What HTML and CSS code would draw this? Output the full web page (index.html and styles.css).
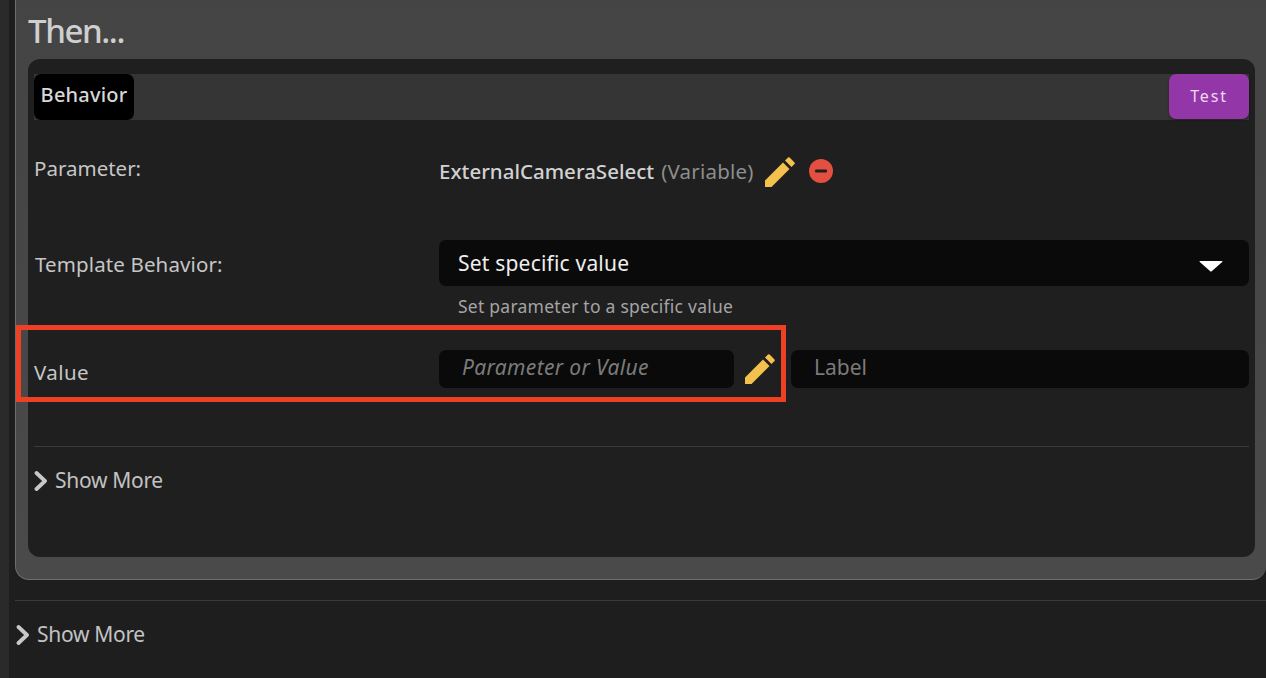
FILE: index.html
```html
<!DOCTYPE html>
<html lang="en">
<head>
<meta charset="utf-8">
<title>Then</title>
<link rel="stylesheet" href="styles.css">
</head>
<body>
<div class="page">
  <aside class="rail"></aside>
  <main class="main">
    <section class="panel">
      <h1 class="title">Then...</h1>
      <div class="card">
        <div class="tabbar">
          <div class="tab">Behavior</div>
          <button class="test">Test</button>
        </div>
        <div class="row row-param">
          <div class="label">Parameter:</div>
          <div class="param">
            <span class="pname">ExternalCameraSelect</span>
            <span class="ptype">(Variable)</span>
            <svg class="pencil pencil-a" viewBox="0 0 30 30"><path d="M0 30V23.5L18 5.5L24.5 12L6.500 30Z M20 3.500L23 .5Q23.800 -.2 24.600 .5L29.500 5.400Q30.200 6.200 29.500 7L26.500 10Z"/></svg>
            <svg class="minus" viewBox="0 0 24 24"><circle cx="12" cy="12" r="12"/><rect x="6" y="10.500" width="12" height="3" rx="1"/></svg>
          </div>
        </div>
        <div class="row row-template">
          <div class="label">Template Behavior:</div>
          <div class="field">
            <div class="select">Set specific value
              <svg class="caret" viewBox="0 0 24 12"><path d="M1 1H23Q24 1 23.200 2L13 11Q12 12 11 11L.8 2Q0 1 1 1Z"/></svg>
            </div>
            <div class="hint">Set parameter to a specific value</div>
          </div>
        </div>
        <div class="row row-value">
          <div class="label">Value</div>
          <div class="inputs">
            <div class="input italic">Parameter or Value</div>
            <svg class="pencil pencil-b" viewBox="0 0 30 30"><path d="M0 30V23.5L18 5.5L24.5 12L6.500 30Z M20 3.500L23 .5Q23.800 -.2 24.600 .5L29.500 5.400Q30.200 6.200 29.500 7L26.500 10Z"/></svg>
            <div class="input wide">Label</div>
          </div>
        </div>
        <div class="more inner">
          <svg class="chev" viewBox="0 0 14 20"><path d="M2.500 2L11 10L2.500 18"/></svg>
          <span>Show More</span>
        </div>
      </div>
    </section>
    <div class="more outer">
      <svg class="chev" viewBox="0 0 14 20"><path d="M2.500 2L11 10L2.500 18"/></svg>
      <span>Show More</span>
    </div>
  </main>
</div>
<div class="highlight"></div>
</body>
</html>
```
FILE: styles.css
```css
* { box-sizing: border-box; }
html, body { margin: 0; height: 100%; overflow: hidden; background: #1e1e1e; }
body { font-family: "Noto Sans", sans-serif; color: #c8c8c8; position: relative; }
.page { display: flex; height: 678px; }
.rail { width: 9px; background: #2a2a2a; flex: none; }
.main { flex: 1; padding-left: 6px; min-width: 0; }
.panel {
  height: 580px;
  background: linear-gradient(#444, #4a4a4a);
  border: 1px solid #6e6e6e;
  border-top: 0;
  border-right: 0;
  border-radius: 0 0 14px 14px;
  padding: 0 11px 0 12px;
}
.title { margin: 0; height: 59px; padding-top: 8px; font-size: 33px; line-height: 45px; font-weight: 500; color: #cfcfcf; letter-spacing: -1.400px; }
.card { height: 498px; background: #1f1f1f; border-radius: 12px; padding: 15px 6px 0; }
.tabbar { height: 46px; background: #353535; display: flex; justify-content: space-between; align-items: flex-start; }
.tab { width: 100px; height: 46px; background: #000; border-radius: 7px; color: #d8d8d8; font-size: 20px; line-height: 41px; text-align: center; font-weight: 500; letter-spacing: .2px; }
.test { width: 80px; height: 45px; background: #9337a8; border: 0; border-radius: 7px; color: #f0d8f5; font: 16px/1 "Noto Sans", sans-serif; letter-spacing: 1.800px; padding: 0 0 2px; box-shadow: 0 1px 2px rgba(0,0,0,.4); }
.row { display: grid; grid-template-columns: 405px 1fr; }
.label { font-size: 20.500px; color: #c6c6c6; line-height: 28px; letter-spacing: 0; }
.row-param { height: 120px; padding-top: 34px; }
.param { display: flex; align-items: center; height: 33px; font-size: 20.500px; }
.pname { color: #d2d2d2; font-weight: 500; margin-right: 7px; }
.ptype { color: #8e8e8e; letter-spacing: .2px; }
.pencil { fill: #f4c14e; flex: none; width: 30px; height: 30px; }
.pencil-a { margin: 2px 0 0 11px; }
.minus { width: 24px; height: 24px; margin-left: 14px; flex: none; }
.minus circle { fill: #e34f40; }
.minus rect { fill: #1f1f1f; }
.row-template { height: 110px; margin-top: -1px; }
.row-template .label { padding-top: 11px; padding-left: 1px; letter-spacing: .12px; }
.select { height: 46px; background: #0a0a0a; border-radius: 7px; color: #efefef; font-size: 21px; line-height: 46px; padding: 0 19px; display: flex; justify-content: space-between; align-items: center; letter-spacing: .2px; margin-top: 1px; }
.caret { width: 24px; height: 12px; fill: #fff; margin-right: 7px; margin-top: 5px; }
.hint { font-size: 17.500px; color: #a4a4a4; padding: 8px 19px 0; line-height: 24px; letter-spacing: .25px; }
.row-value { height: 96px; margin-top: 1px; }
.row-value .label { padding-top: 8px; letter-spacing: .4px; }
.inputs { display: flex; align-items: flex-start; }
.input { width: 295px; height: 38px; background: #0a0a0a; border-radius: 7px; color: #7b7b7b; font-size: 21px; line-height: 35px; padding: 0 23px; }
.italic { font-style: italic; letter-spacing: .35px; }
.wide { width: 458px; }
.pencil-b { margin: 4px 16px 0 11px; }
.more { display: flex; align-items: center; font-size: 21px; color: #c2c2c2; letter-spacing: -.3px; padding-bottom: 2px; }
.inner { height: 69px; border-top: 1px solid #3a3a3a; }
.outer { margin-top: 20px; height: 68px; border-top: 1px solid #3a3a3a; padding-left: 1px; }
.chev { width: 14px; height: 20px; fill: none; stroke: #c8c8c8; stroke-width: 3.800px; stroke-linecap: round; stroke-linejoin: round; margin-right: 7px; margin-top: 2px; }
.highlight { position: absolute; left: 16px; top: 325px; width: 770px; height: 77px; border: 5px solid #ee4024; }
```
